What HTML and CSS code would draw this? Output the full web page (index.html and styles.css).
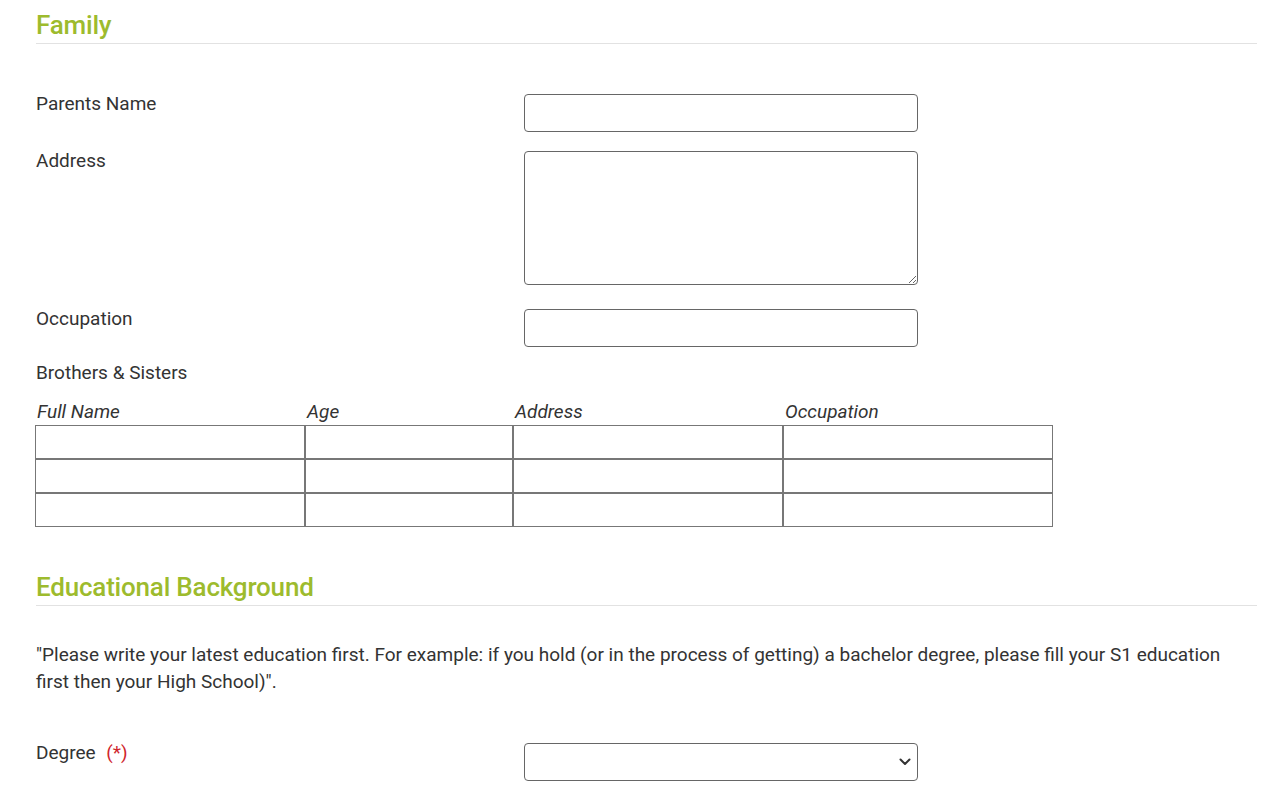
FILE: index.html
```html
<!DOCTYPE html>
<html lang="en">
<head>
<meta charset="utf-8">
<title>Family</title>
<link rel="stylesheet" href="styles.css">
</head>
<body>
<div class="page">
  <section class="section">
    <h2 class="sec-title">Family</h2>
    <div class="form-body">
      <div class="form-row row-1">
        <label class="label">Parents Name</label>
        <input class="field" type="text">
      </div>
      <div class="form-row row-2">
        <label class="label">Address</label>
        <textarea class="field area"></textarea>
      </div>
      <div class="form-row row-3">
        <label class="label">Occupation</label>
        <input class="field" type="text">
      </div>
      <div class="label sib-label">Brothers &amp; Sisters</div>
      <div class="sib-table">
        <div class="th">Full Name</div>
        <div class="th">Age</div>
        <div class="th">Address</div>
        <div class="th">Occupation</div>
        <input class="cell" type="text"><input class="cell" type="text"><input class="cell" type="text"><input class="cell" type="text">
        <input class="cell" type="text"><input class="cell" type="text"><input class="cell" type="text"><input class="cell" type="text">
        <input class="cell" type="text"><input class="cell" type="text"><input class="cell" type="text"><input class="cell" type="text">
      </div>
    </div>
  </section>
  <section class="section edu">
    <h2 class="sec-title">Educational Background</h2>
    <p class="note">"Please write your latest education first. For example: if you hold (or in the process of getting) a bachelor degree, please fill your S1 education first then your High School)".</p>
    <div class="form-row">
      <label class="label">Degree <span class="req">(*)</span></label>
      <div class="select-wrap">
        <select class="field select"><option></option></select>
        <svg class="chev" width="12" height="8" viewBox="0 0 12 8"><path d="M1.5 1.5 L6 6 L10.5 1.5" fill="none" stroke="#333" stroke-width="2" stroke-linecap="round" stroke-linejoin="round"/></svg>
      </div>
    </div>
  </section>
</div>
</body>
</html>
```
FILE: styles.css
```css
* { box-sizing: border-box; }
html, body { margin: 0; padding: 0; background: #fff; }
body {
  font-family: Roboto, "Liberation Sans", sans-serif;
  color: #333;
  font-size: 19px;
}
.page { padding: 10px 6px 0 36px; }
.sec-title {
  margin: 0;
  font-size: 26px;
  line-height: 31px;
  font-weight: 500;
  color: #9dbb2d;
  padding-bottom: 2px;
  border-bottom: 1px solid #e2e2e2;
  letter-spacing: -0.2px;
}
.form-body { padding-top: 50px; }
.form-row {
  display: grid;
  grid-template-columns: 488px 394px;
  align-items: start;
}
.row-1 { margin-bottom: 19px; }
.row-2 { margin-bottom: 24px; }
.row-3 { margin-bottom: 16px; }
.label {
  display: block;
  font-size: 19px;
  line-height: 20px;
  color: #333;
}
.field {
  display: block;
  width: 394px;
  height: 38px;
  border: 1px solid #666;
  border-radius: 4px;
  background: #fff;
  font: inherit;
  margin: 0;
}
.area { height: 134px; resize: vertical; }
.sib-label { margin-bottom: 19px; }
.sib-table {
  display: grid;
  grid-template-columns: 270px 208px 270px 270px;
  margin-left: -1px;
}
.th {
  font-style: italic;
  font-size: 19px;
  line-height: 20px;
  padding-left: 2px;
  margin-bottom: 3px;
}
.cell {
  display: block;
  width: 100%;
  height: 34px;
  margin: 0;
  border: 1px solid #777;
  background: #fff;
}
.edu { margin-top: 45px; }
.note {
  margin: 35px 0 48px;
  line-height: 27px;
  font-size: 19px;
}
.req { color: #d0262d; margin-left: 6px; }
.select-wrap { position: relative; width: 394px; }
.select { appearance: none; -webkit-appearance: none; }
.chev { position: absolute; right: 7px; top: 15px; }
```
